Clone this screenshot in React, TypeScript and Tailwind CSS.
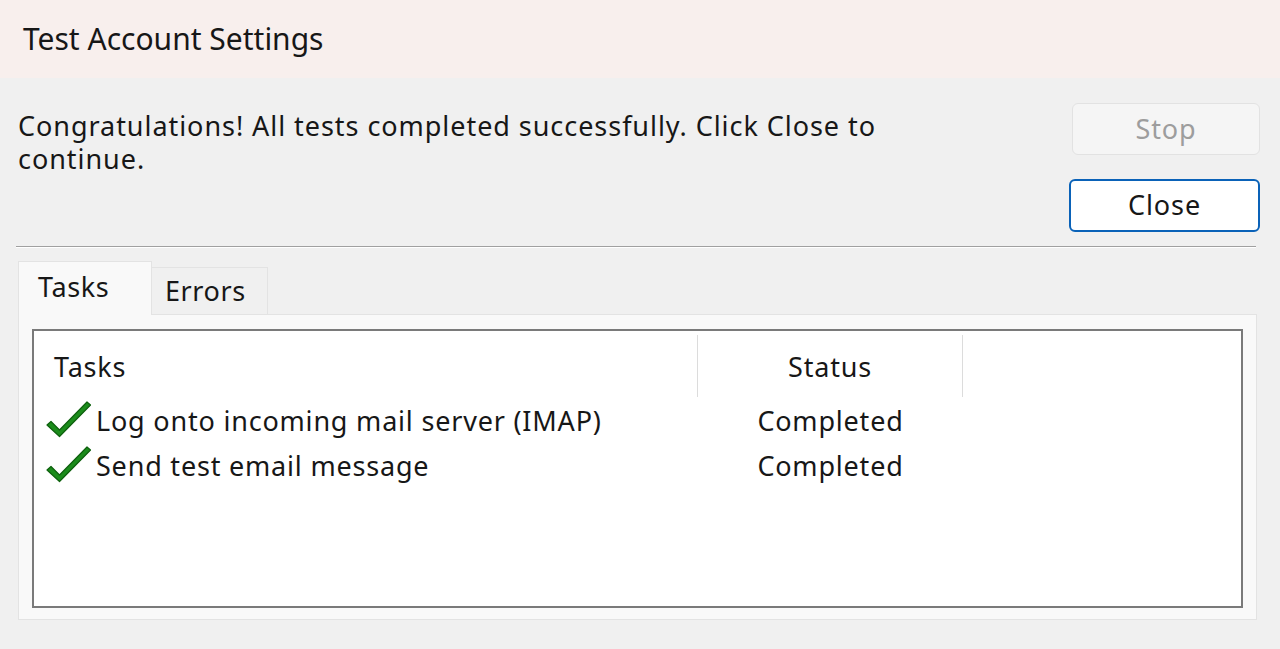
import React from "react";

function Check() {
  return (
    <svg width="46" height="38" viewBox="0 0 46 38" className="shrink-0 -mt-[6px]">
      <path
        d="M1 25 L5 21.5 L13.5 30 L41 2 L44.5 5 L13.5 36.5 Z"
        fill="#1b8c1b"
        stroke="#0d600d"
        strokeWidth="1.2"
        strokeLinejoin="round"
      />
    </svg>
  );
}

const tasks = [
  { name: "Log onto incoming mail server (IMAP)", status: "Completed" },
  { name: "Send test email message", status: "Completed" },
];

export default function App() {
  return (
    <div
      className="w-[1280px] h-[649px] bg-[#f0f0f0] overflow-hidden flex flex-col text-[#171717]"
      style={{ fontFamily: '"Noto Sans", "Open Sans", sans-serif' }}
    >
      <div className="h-[78px] shrink-0 bg-[#f8efed] flex items-center pl-[23px] pb-[2px] text-[30px]">
        Test Account Settings
      </div>

      <div className="flex-1 px-[16px] flex flex-col">
        <div className="flex justify-between pt-[25px]">
          <p className="pl-[2px] pt-[6px] text-[27px] leading-[33px] tracking-[0.95px] max-w-[900px]">
            Congratulations! All tests completed successfully. Click Close to
            continue.
          </p>
          <div className="flex flex-col items-end gap-[24px] pr-[4px] tracking-[0.9px]">
            <button className="w-[188px] h-[52px] rounded-[6px] border border-[#e2e2e2] bg-[#f5f5f5] text-[#9d9d9d] text-[27px]">
              Stop
            </button>
            <button className="w-[191px] h-[53px] rounded-[6px] border-2 border-[#0a62b8] bg-white text-[27px]">
              Close
            </button>
          </div>
        </div>

        <div className="mt-[14px] h-[2px] bg-[#a0a0a0] border-b border-white mr-[8px]" />

        <div className="pl-[2px] mt-[13px] flex items-end text-[27px] tracking-[0.6px]">
          <div className="w-[134px] h-[54px] bg-[#f9f9f9] border border-b-0 border-[#e3e3e3] pl-[19px] pt-[5px] relative z-10 -mb-px">
            Tasks
          </div>
          <div className="w-[116px] h-[47px] bg-[#f0f0f0] border border-l-0 border-b-0 border-[#e3e3e3] pl-[13px] pt-[3px]">
            Errors
          </div>
        </div>

        <div className="ml-[2px] mr-[7px] h-[306px] bg-[#f9f9f9] border border-[#e3e3e3] px-[13px] pt-[14px] pb-[11px]">
          <div className="h-full bg-white border-2 border-[#7a7a7a] flex flex-col text-[27px] tracking-[0.8px]">
            <div className="flex h-[62px] mt-[4px]">
              <div className="w-[664px] pl-[20px] pt-[12px] border-r border-[#dcdcdc]">
                Tasks
              </div>
              <div className="w-[265px] text-center pt-[12px] border-r border-[#dcdcdc]">
                Status
              </div>
            </div>
            <div className="flex flex-col pt-[2px]">
              {tasks.map((t) => (
                <div key={t.name} className="flex h-[45px] items-center">
                  <div className="w-[664px] flex items-center pl-[12px]">
                    <Check />
                    <span className="ml-[4px]">{t.name}</span>
                  </div>
                  <div className="w-[265px] text-center">{t.status}</div>
                </div>
              ))}
            </div>
          </div>
        </div>
      </div>
    </div>
  );
}
